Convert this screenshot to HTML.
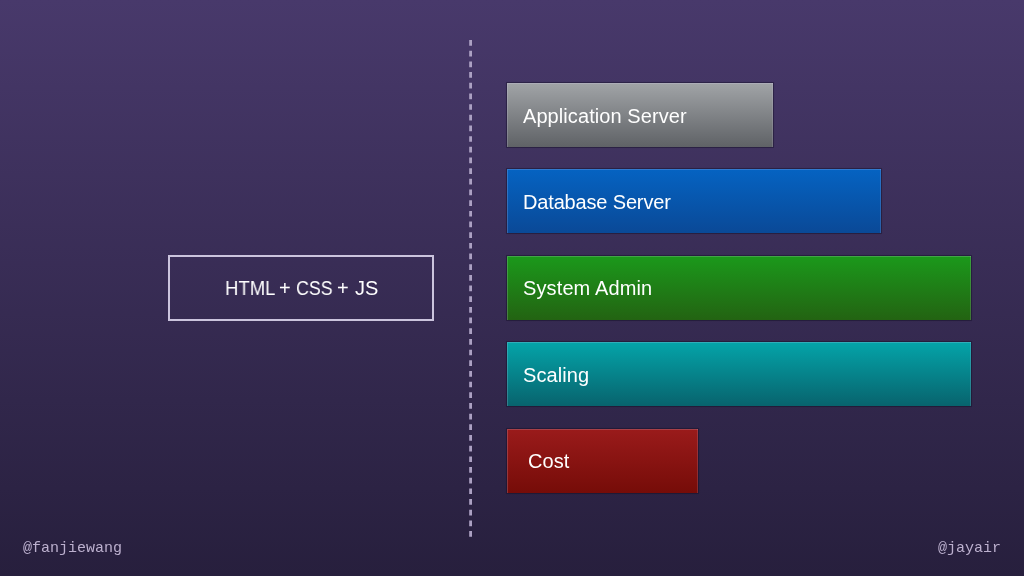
<!DOCTYPE html>
<html>
<head>
<meta charset="utf-8">
<style>
html,body{margin:0;padding:0;}
body{width:1024px;height:576px;overflow:hidden;position:relative;
  background:linear-gradient(to bottom,#48396b 0%,#271f3d 100%);
  font-family:"Liberation Sans",sans-serif;}
.dash{position:absolute;left:0;top:0;}
.html{position:absolute;left:168px;top:255px;width:266px;height:66px;box-sizing:border-box;border:2px solid #cbc4dd;
  color:#fff;font-size:20px;letter-spacing:-0.7px;text-align:center;line-height:62px;will-change:transform;}
.tk{position:absolute;top:277px;font-size:20px;color:#fff;transform-origin:0 0;will-change:transform;white-space:nowrap;}
.bar{position:absolute;left:507px;height:64px;color:#fff;font-size:20px;line-height:64px;will-change:transform;
  box-sizing:border-box;padding-left:16px;
  box-shadow:0 0 0 1px rgba(20,14,40,0.4), 0 0 2px rgba(0,0,0,0.25), inset 1px 1px 0 rgba(225,215,255,0.2), inset -1px 0 0 rgba(225,215,255,0.15);}
.b1{padding-top:1px;letter-spacing:0.08px;top:83px;width:266px;background:linear-gradient(to bottom,#a1a4a7,#5f6266);}
.b2{padding-top:1px;letter-spacing:-0.16px;top:169px;width:374px;background:linear-gradient(to bottom,#0563c2,#0a4997);}
.b3{letter-spacing:0.12px;top:256px;width:464px;background:linear-gradient(to bottom,#1b991b,#236312);}
.b4{padding-top:1px;letter-spacing:0.1px;top:342px;width:464px;background:linear-gradient(to bottom,#04a4a9,#08636d);}
.b5{letter-spacing:0.1px;top:429px;width:191px;background:linear-gradient(to bottom,#9a1b1b,#760c08);padding-left:21px;}
.h{position:absolute;top:539px;will-change:transform;font-family:"Liberation Mono",monospace;font-size:15px;color:#bcb0ce;line-height:20px;}
</style>
</head>
<body>
<svg class="dash" width="1024" height="576" viewBox="0 0 1024 576"><line x1="470.6" y1="40.1" x2="470.6" y2="537" stroke="#aca1c3" stroke-width="2.8" stroke-dasharray="5.7 4.974"/></svg>
<div class="html"></div>
<div class="tk" style="left:224.7px;transform:scaleX(0.926)">HTML</div>
<div class="tk" style="left:279.2px">+</div>
<div class="tk" style="left:296.3px;transform:scaleX(0.89)">CSS</div>
<div class="tk" style="left:337px">+</div>
<div class="tk" style="left:354.8px;transform:scaleX(0.99)">JS</div>
<div class="bar b1">Application Server</div>
<div class="bar b2">Database Server</div>
<div class="bar b3">System Admin</div>
<div class="bar b4">Scaling</div>
<div class="bar b5">Cost</div>
<div class="h" style="left:23px">@fanjiewang</div>
<div class="h" style="left:938px">@jayair</div>
</body>
</html>
